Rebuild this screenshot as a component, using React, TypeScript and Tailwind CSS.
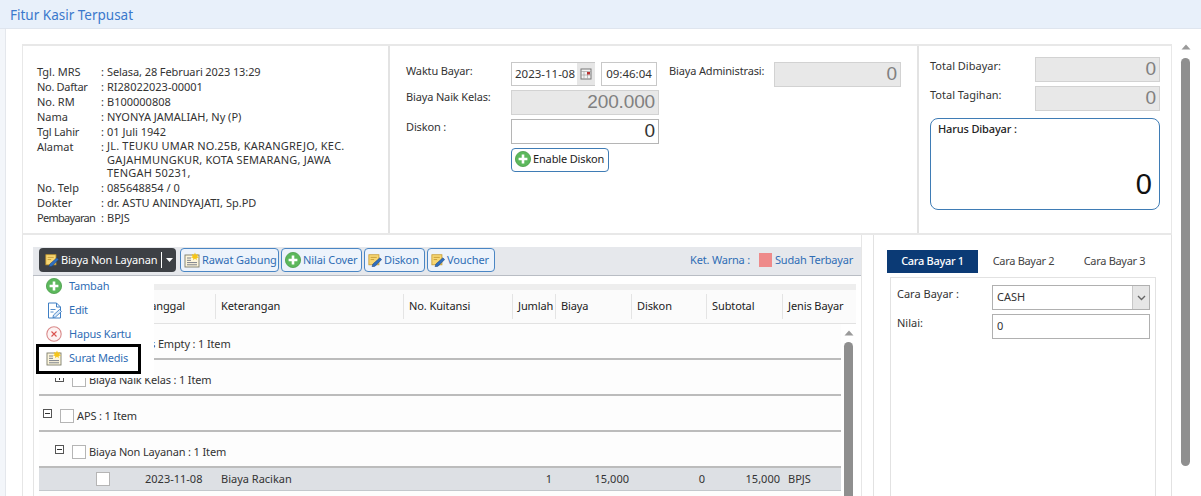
import React from "react";

const PlusIcon = ({ s = 16 }: { s?: number }) => (
  <svg width={s} height={s} viewBox="0 0 16 16" className="shrink-0">
    <circle cx="8" cy="8" r="7.6" fill="#5cb85c" />
    <circle cx="8" cy="8" r="7.6" fill="none" stroke="#4a9d4a" strokeWidth="0.8" />
    <path d="M8 3.6v8.8M3.6 8h8.8" stroke="#fff" strokeWidth="2.6" />
  </svg>
);

const NoteIcon = ({ s = 16 }: { s?: number }) => (
  <svg width={s} height={s} viewBox="0 0 16 16" className="shrink-0">
    <rect x="1" y="3" width="14" height="12" fill="#fdf6dc" stroke="#7d7d6a" strokeWidth="0.9" />
    <path d="M3 6h4M3 8.3h4M3 10.6h10M3 12.8h10" stroke="#6b7280" strokeWidth="0.9" />
    <path d="M11 0.5l.9 2.2 2.3-.6-1 2.1 1.8 1.4-2.3.4-.1 2.3-1.6-1.7-1.7 1.7-.1-2.3-2.2-.4 1.7-1.4-1-2.1 2.3.6z" fill="#f5c518" />
  </svg>
);

const PencilIcon = ({ s = 14 }: { s?: number }) => (
  <svg width={s} height={s} viewBox="0 0 16 16" className="shrink-0">
    <rect x="1" y="2" width="11.5" height="11.5" fill="#f7d774" stroke="#c79a2b" strokeWidth="0.9" />
    <path d="M3 5h7M3 7.5h4" stroke="#b98b22" strokeWidth="0.8" />
    <path d="M13.6 5.5l2 2-7.5 7.6-3.4 0.7 0.8-3.2z" fill="#2f6fc0" stroke="#1c3f78" strokeWidth="0.6" />
  </svg>
);

const EditIcon = () => (
  <svg width="17" height="17" viewBox="0 0 17 17" className="shrink-0">
    <path d="M2.5 1h8l4 4v11h-12z" fill="#fff" stroke="#3f7fc4" strokeWidth="1" />
    <path d="M10.5 1v4h4" fill="none" stroke="#3f7fc4" strokeWidth="1" />
    <path d="M4.5 7.5h5M4.5 10h3" stroke="#3f7fc4" strokeWidth="0.9" />
    <path d="M13.5 7.5l2 2-6 5.5-2.6.6.6-2.6z" fill="#dbe9f8" stroke="#3f7fc4" strokeWidth="0.9" />
  </svg>
);

const XIcon = () => (
  <svg width="16" height="16" viewBox="0 0 16 16" className="shrink-0">
    <circle cx="8" cy="8" r="7.2" fill="#fdf2f2" stroke="#d98a8a" strokeWidth="1.1" />
    <path d="M5.5 5.5l5 5M10.5 5.5l-5 5" stroke="#d9534f" strokeWidth="1.1" />
  </svg>
);

const Expander = ({ open }: { open: boolean }) => (
  <svg width="9" height="9" viewBox="0 0 9 9" className="shrink-0">
    <rect x="0.5" y="0.5" width="8" height="8" fill="#fff" stroke="#555" strokeWidth="1" />
    <path d="M2 4.5h5" stroke="#333" strokeWidth="1" />
    {!open && <path d="M4.5 2v5" stroke="#333" strokeWidth="1" />}
  </svg>
);

const Check = () => <div className="h-[14px] w-[14px] shrink-0 border border-[#b5b5b5] bg-white" />;

const Arrow = () => (
  <svg width="10" height="6" viewBox="0 0 10 6" className="block">
    <path d="M5 0.5L9.5 5.5H0.5z" fill="#9a9a9a" />
  </svg>
);

const ToolBtn = ({ icon, label, w }: { icon: React.ReactNode; label: string; w: string }) => (
  <div className={`flex h-[24px] items-center gap-[2px] rounded-[4px] border border-[#4a86c4] bg-[#edf3fb] pl-[3px] text-[11px] tracking-[-0.1px] whitespace-nowrap text-[#2f6db5] ${w}`}>
    {icon}
    <span>{label}</span>
  </div>
);

const ReadOnly = ({ v, className }: { v: string; className: string }) => (
  <div className={`flex items-center justify-end border border-[#d2d2d2] bg-[#e8e8e8] pr-[3px] font-['Liberation_Sans',sans-serif] text-[19px] text-[#808080] ${className}`}>{v}</div>
);

const patient: [string, string, string, string][] = [
  ["Tgl. MRS", "Selasa, 28 Februari 2023 13:29", "", "tracking-[-0.1px]"],
  ["No. Daftar", "RI28022023-00001", "tracking-[-0.3px]", ""],
  ["No. RM", "B100000808", "", ""],
  ["Nama", "NYONYA JAMALIAH, Ny (P)", "", ""],
  ["Tgl Lahir", "01 Juli 1942", "tracking-[-0.2px]", ""],
  ["Alamat", "JL. TEUKU UMAR NO.25B, KARANGREJO, KEC. GAJAHMUNGKUR, KOTA SEMARANG, JAWA TENGAH 50231,", "", "leading-[13.5px] tracking-[0.2px]"],
  ["No. Telp", "085648854 / 0", "", ""],
  ["Dokter", "dr. ASTU ANINDYAJATI, Sp.PD", "", ""],
  ["Pembayaran", "BPJS", "tracking-[-0.7px]", ""],
];

const gridCols = "grid-cols-[100px_76px_188px_109px_43px_76px_75px_76px_74px]";
const bodyCols = "grid-cols-[100px_76px_188px_109px_43px_76px_75px_76px_59px]";

const headers = ["", "Tanggal", "Keterangan", "No. Kuitansi", "Jumlah", "Biaya", "Diskon", "Subtotal", "Jenis Bayar"];

const GroupRow = ({ pad, open, label }: { pad: string; open: boolean; label: string }) => (
  <div className={`flex h-[36px] items-start border-b-2 border-[#bcbcbc] pt-[13px] ${pad}`}>
    <Expander open={open} />
    <div className="ml-[8px]"><Check /></div>
    <span className="ml-[3px] text-[11px] leading-[14px] tracking-[-0.15px] whitespace-nowrap text-[#333]">{label}</span>
  </div>
);

export default function App() {
  return (
    <div className="h-[496px] w-[1201px] overflow-hidden bg-[#f3f6fa] font-['Noto_Sans',sans-serif] text-[#333]">
      <div className="flex h-[29px] items-center border-b border-[#dfe5ee] bg-[#e8f0fa] pt-[2px] pl-[10px] text-[13.5px] text-[#3a78cc]">Fitur Kasir Terpusat</div>
      <div className="ml-[5px] flex h-[467px] border-l border-[#e4e7ec] bg-white pt-[15px] pl-[16px]">
        <div className="w-[1150px] shrink-0">
          {/* Top */}
          <div className="flex h-[191px] border-t-2 border-b-2 border-l border-[#e8e8e8]">
            <div className="w-[367px] shrink-0 border-r-2 border-[#e3e3e3] pt-[18px] pl-[14px] text-[11px] leading-[15px]">
              {patient.map(([k, v, kc, vc]) => (
                <div key={k} className="flex">
                  <div className={`w-[64px] shrink-0 whitespace-nowrap ${kc}`}>{k}</div>
                  <div className="w-[6px] shrink-0">:</div>
                  <div className={`w-[245px] ${vc}`}>{v}</div>
                </div>
              ))}
            </div>
            <div className="flex w-[529px] shrink-0 border-r-2 border-[#e3e3e3] pt-[16px] pl-[16px] text-[11px] tracking-[-0.15px]">
              <div className="w-[105px] shrink-0">
                <div className="h-[27px] pt-[1px]">Waktu Bayar:</div>
                <div className="h-[30px]">Biaya Naik Kelas:</div>
                <div>Diskon :</div>
              </div>
              <div className="w-[158px] shrink-0">
                <div className="flex h-[24px] w-[146px] tracking-normal">
                  <div className="flex w-[84px] items-center border border-r-0 border-[#c8c8c8] pl-[3px] text-[11.5px]">
                    <span className="flex-1">2023-11-08</span>
                    <div className="flex h-full w-[18px] items-center justify-center bg-[#e6e6e6]">
                      <svg width="12" height="12" viewBox="0 0 12 12"><rect x="1" y="1" width="10" height="10" fill="#f4f4f4" stroke="#777" /><path d="M1 3.5h10M4 3.5v7M7.5 3.5v7M1 7h10" stroke="#999" strokeWidth="0.6" /><rect x="7" y="4" width="3" height="2.5" fill="#b33" /></svg>
                    </div>
                  </div>
                  <div className="ml-[6px] flex w-[56px] items-center justify-center border border-[#c8c8c8] text-[11.5px]">09:46:04</div>
                </div>
                <ReadOnly v="200.000" className="mt-[4px] h-[25px] w-[148px]" />
                <div className="mt-[4px] flex h-[25px] w-[148px] items-center justify-end border border-[#b5b5b5] bg-white pr-[3px] font-['Liberation_Sans',sans-serif] text-[19px] text-[#333]">0</div>
                <div className="mt-[4px] flex h-[24px] w-[98px] items-center gap-[2px] rounded-[4px] border border-[#3f7cb5] bg-white pb-[2px] pl-[3px] text-[11px] whitespace-nowrap text-[#222]">
                  <PlusIcon />
                  <span>Enable Diskon</span>
                </div>
              </div>
              <div className="w-[105px] shrink-0 pt-[1px] whitespace-nowrap">Biaya Administrasi:</div>
              <ReadOnly v="0" className="h-[25px] w-[127px]" />
            </div>
            <div className="flex-1 border-r border-[#e8e8e8] pt-[11px] pl-[11px] text-[11px]">
              <div className="flex h-[29px]">
                <div className="w-[105px] pt-[1px]">Total Dibayar:</div>
                <ReadOnly v="0" className="h-[25px] w-[125px]" />
              </div>
              <div className="flex h-[32px]">
                <div className="w-[105px] pt-[1px]">Total Tagihan:</div>
                <ReadOnly v="0" className="h-[25px] w-[125px]" />
              </div>
              <div className="flex h-[92px] w-[230px] flex-col justify-between rounded-[8px] border border-[#3f7cb5] bg-white pt-[2px] pr-[7px] pb-[9px] pl-[7px]">
                <div className="font-medium tracking-[-0.15px] text-[#222]">Harus Dibayar :</div>
                <div className="text-right font-['Liberation_Sans',sans-serif] text-[29px] leading-[32px] text-[#111]">0</div>
              </div>
            </div>
          </div>

          {/* Bottom */}
          <div className="flex h-[261px] gap-[11px]">
            <div className="relative w-[840px] shrink-0 border-r border-l border-[#e6e6e6] pt-[12px] pl-[10px]">
              <div className="flex h-[29px] items-start gap-[2px] border-b border-[#b9bdc4] bg-[#e6e8ec] pt-[1px] pl-[6px]">
                <div className="mr-[2px] flex h-[24px] w-[137px] items-center rounded-[4px] bg-[#3d4045] pl-[6px] text-[11px] tracking-[-0.15px] whitespace-nowrap text-white">
                  <PencilIcon />
                  <span className="ml-[2px]">Biaya Non Layanan</span>
                  <span className="mr-[4px] ml-[4px] h-[16px] w-px bg-white" />
                  <svg width="7" height="4" viewBox="0 0 7 4"><path d="M0 0h7L3.5 4z" fill="#fff" /></svg>
                </div>
                <ToolBtn icon={<NoteIcon />} label="Rawat Gabung" w="w-[99px]" />
                <ToolBtn icon={<PlusIcon />} label="Nilai Cover" w="w-[81px]" />
                <ToolBtn icon={<PencilIcon />} label="Diskon" w="w-[61px]" />
                <ToolBtn icon={<PencilIcon />} label="Voucher" w="w-[68px]" />
                <div className="flex h-[24px] flex-1 items-center justify-end pr-[8px] text-[11px] tracking-[-0.2px] whitespace-nowrap text-[#2f6db5]">
                  <span>Ket. Warna :</span>
                  <span className="mr-[3px] ml-[9px] h-[14px] w-[13px] bg-[#ee8a8a]" />
                  <span>Sudah Terbayar</span>
                </div>
              </div>
              <div className="h-[220px] border-l border-[#e4e4e4] pt-[8px] pl-[5px]">
                <div className="w-[817px]">
                  <div className="h-[6px] bg-[#eeeeee]" />
                  <div className={`grid h-[34px] ${gridCols} border-b border-[#e2e2e2] bg-[#fbfbfb] text-[11px] tracking-[-0.1px] text-[#222]`}>
                    {headers.map((h, i) => (
                      <div key={i} className={`flex items-center whitespace-nowrap ${i > 0 ? "my-[4px] border-l border-[#e4e4e4] pl-[5px]" : ""}`}>{h}</div>
                    ))}
                  </div>
                  <div className="flex">
                    <div className="w-[802px] shrink-0 bg-[#fdfdfd]">
                      <GroupRow pad="pl-[16px]" open={false} label="Biaya Kasir Is Empty : 1 Item" />
                      <GroupRow pad="pl-[16px]" open={false} label="Biaya Naik Kelas : 1 Item" />
                      <GroupRow pad="pl-[4px]" open={true} label="APS : 1 Item" />
                      <GroupRow pad="pl-[16px]" open={true} label="Biaya Non Layanan : 1 Item" />
                      <div className={`grid h-[23px] ${bodyCols} items-center border-b border-[#c4c8cd] bg-[#dde0e4] text-[11px] text-[#333]`}>
                        <div className="pl-[57px]"><Check /></div>
                        <div className="pl-[6px]">2023-11-08</div>
                        <div className="pl-[6px]">Biaya Racikan</div>
                        <div />
                        <div className="pr-[3px] text-right">1</div>
                        <div className="pr-[2px] text-right">15,000</div>
                        <div className="pr-[1px] text-right">0</div>
                        <div className="pr-[2px] text-right">15,000</div>
                        <div className="pl-[6px]">BPJS</div>
                      </div>
                    </div>
                    <div className="ml-[3px] w-[9px] pt-[6px]">
                      <Arrow />
                      <div className="mt-[6px] h-[170px] w-[9px] rounded-t-full bg-[#8f8f8f]" />
                    </div>
                  </div>
                </div>
              </div>

              {/* Dropdown */}
              <div className="absolute top-[41px] left-[16px] z-10 h-[102px] w-[115px] bg-white text-[11px] tracking-[-0.2px] text-[#2f6db5]">
                <div className="-mt-[2px]">
                  <div className="flex h-[24px] items-center pl-[7px]"><PlusIcon /><span className="ml-[7px]">Tambah</span></div>
                  <div className="flex h-[24px] items-center pl-[7px]"><EditIcon /><span className="ml-[6px]">Edit</span></div>
                  <div className="flex h-[24px] items-center pl-[7px]"><XIcon /><span className="ml-[7px]">Hapus Kartu</span></div>
                  <div className="flex h-[24px] items-center pl-[7px]"><NoteIcon /><span className="ml-[7px]">Surat Medis</span></div>
                </div>
                <div className="absolute top-[68px] -left-[3px] h-[30px] w-[105px] border-[3px] border-black" />
              </div>
            </div>

            <div className="flex-1 border-r border-l border-[#e2e2e2] pt-[15px] pl-[13px]">
              <div className="flex h-[23px] text-[11px] tracking-[-0.3px]">
                <div className="flex w-[91px] items-center justify-center bg-[#0b3a75] font-medium text-white">Cara Bayar 1</div>
                <div className="flex w-[91px] items-center justify-center text-[#444]">Cara Bayar 2</div>
                <div className="flex w-[91px] items-center justify-center text-[#444]">Cara Bayar 3</div>
              </div>
              <div className="mt-[4px] ml-[3px] h-[230px] w-[266px] border border-[#e2e2e2] pt-[7px] pl-[6px] text-[11px]">
                <div className="flex h-[29px]">
                  <div className="w-[95px] pt-[1px]">Cara Bayar :</div>
                  <div className="flex h-[25px] w-[158px] items-center border border-[#b0b0b0] pl-[4px] text-[11px]">
                    <span className="flex-1">CASH</span>
                    <div className="flex h-full w-[17px] items-center justify-center border-l border-[#c8c8c8] bg-[#e6e6e6]">
                      <svg width="9" height="6" viewBox="0 0 9 6"><path d="M1 1l3.5 3.5L8 1" fill="none" stroke="#666" strokeWidth="1.4" /></svg>
                    </div>
                  </div>
                </div>
                <div className="flex">
                  <div className="w-[95px] pt-[1px]">Nilai:</div>
                  <div className="flex h-[25px] w-[158px] items-center border border-[#b0b0b0] pl-[4px] text-[11px]">0</div>
                </div>
              </div>
            </div>
          </div>
        </div>
        <div className="ml-[9px] w-[9px]">
          <Arrow />
          <div className="mt-[8px] h-[408px] w-[9px] rounded-full bg-[#8f8f8f]" />
        </div>
      </div>
    </div>
  );
}
